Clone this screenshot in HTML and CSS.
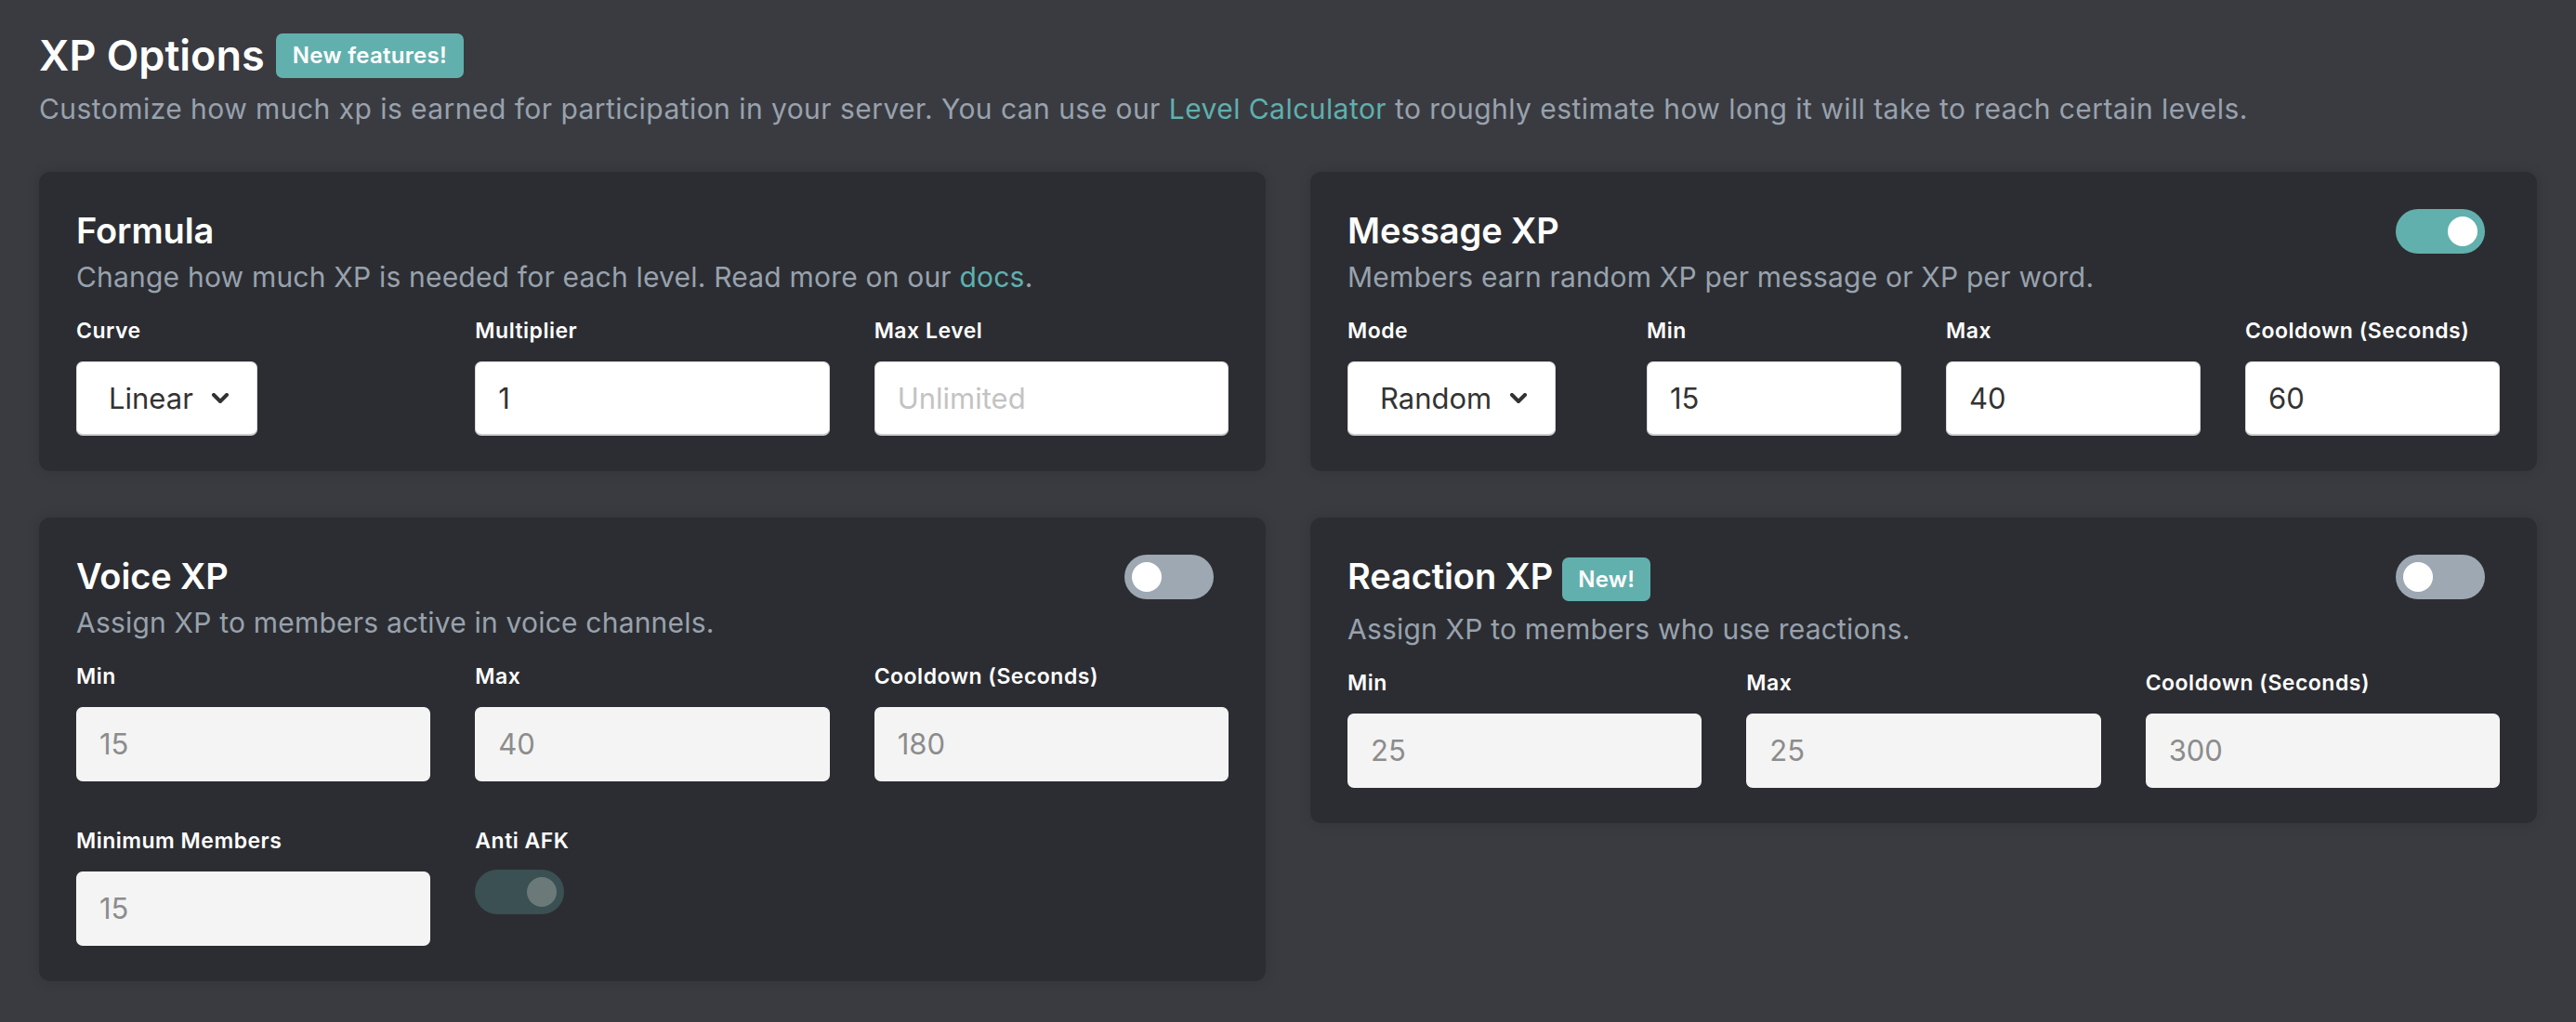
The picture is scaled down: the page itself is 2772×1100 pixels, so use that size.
FILE: index.html
```html
<!DOCTYPE html>
<html lang="en">
<head>
<meta charset="utf-8">
<title>XP Options</title>
<link rel="stylesheet" href="styles.css">
</head>
<body>
<div class="page">
  <header class="page-head">
    <h1 class="page-title">XP Options <span class="badge badge-lg">New features!</span></h1>
    <p class="page-sub">Customize how much xp is earned for participation in your server. You can use our <a class="link" href="#">Level Calculator</a> to roughly estimate how long it will take to reach certain levels.</p>
  </header>

  <div class="cards">
    <section class="card">
      <div class="card-head">
        <h2 class="card-title">Formula</h2>
      </div>
      <p class="card-desc">Change how much XP is needed for each level. Read more on our <a class="link" href="#">docs</a>.</p>
      <div class="fields cols-3">
        <div class="field">
          <label class="label">Curve</label>
          <div class="select"><span>Linear</span><svg class="chev" viewBox="0 0 20 12" width="20" height="12"><polyline points="3,2 10,9 17,2" fill="none" stroke="#333" stroke-width="4" stroke-linecap="round" stroke-linejoin="round"/></svg></div>
        </div>
        <div class="field">
          <label class="label">Multiplier</label>
          <input class="input" type="text" value="1">
        </div>
        <div class="field">
          <label class="label">Max Level</label>
          <input class="input" type="text" placeholder="Unlimited">
        </div>
      </div>
    </section>

    <section class="card">
      <div class="card-head">
        <h2 class="card-title">Message XP</h2>
        <div class="toggle on"><span class="knob"></span></div>
      </div>
      <p class="card-desc">Members earn random XP per message or XP per word.</p>
      <div class="fields cols-4">
        <div class="field">
          <label class="label">Mode</label>
          <div class="select"><span>Random</span><svg class="chev" viewBox="0 0 20 12" width="20" height="12"><polyline points="3,2 10,9 17,2" fill="none" stroke="#333" stroke-width="4" stroke-linecap="round" stroke-linejoin="round"/></svg></div>
        </div>
        <div class="field">
          <label class="label">Min</label>
          <input class="input" type="text" value="15">
        </div>
        <div class="field">
          <label class="label">Max</label>
          <input class="input" type="text" value="40">
        </div>
        <div class="field">
          <label class="label">Cooldown (Seconds)</label>
          <input class="input" type="text" value="60">
        </div>
      </div>
    </section>

    <section class="card">
      <div class="card-head">
        <h2 class="card-title">Voice XP</h2>
        <div class="toggle"><span class="knob"></span></div>
      </div>
      <p class="card-desc">Assign XP to members active in voice channels.</p>
      <div class="fields cols-3">
        <div class="field">
          <label class="label">Min</label>
          <input class="input" type="text" value="15" disabled>
        </div>
        <div class="field">
          <label class="label">Max</label>
          <input class="input" type="text" value="40" disabled>
        </div>
        <div class="field">
          <label class="label">Cooldown (Seconds)</label>
          <input class="input" type="text" value="180" disabled>
        </div>
        <div class="field">
          <label class="label">Minimum Members</label>
          <input class="input" type="text" value="15" disabled>
        </div>
        <div class="field">
          <label class="label">Anti AFK</label>
          <div class="toggle on dim"><span class="knob"></span></div>
        </div>
      </div>
    </section>

    <section class="card">
      <div class="card-head">
        <h2 class="card-title with-badge"><span>Reaction XP</span><span class="badge badge-sm">New!</span></h2>
        <div class="toggle"><span class="knob"></span></div>
      </div>
      <p class="card-desc">Assign XP to members who use reactions.</p>
      <div class="fields cols-3">
        <div class="field">
          <label class="label">Min</label>
          <input class="input" type="text" value="25" disabled>
        </div>
        <div class="field">
          <label class="label">Max</label>
          <input class="input" type="text" value="25" disabled>
        </div>
        <div class="field">
          <label class="label">Cooldown (Seconds)</label>
          <input class="input" type="text" value="300" disabled>
        </div>
      </div>
    </section>
  </div>
</div>
</body>
</html>
```

FILE: styles.css
```css
* { box-sizing: border-box; }

html, body {
  margin: 0;
  padding: 0;
  background: #3a3b41;
}

body {
  font-family: Inter, "Noto Sans", "Liberation Sans", sans-serif;
  color: #ffffff;
}

.page {
  padding: 32px 42px 40px;
}

.page-head {
  margin-bottom: 45px;
}

.page-title {
  margin: 0;
  font-size: 45px;
  line-height: 56px;
  font-weight: 600;
  letter-spacing: 0;
  display: flex;
  align-items: center;
}

.badge {
  display: inline-flex;
  align-items: center;
  justify-content: center;
  background: #62b0ae;
  color: #ffffff;
  font-weight: 600;
  border-radius: 7px;
  letter-spacing: 0.3px;
}

.badge-lg {
  height: 48px;
  padding: 0 18px;
  font-size: 24px;
  margin-left: 12px;
}

.badge-sm {
  height: 47px;
  padding: 0 17px;
  font-size: 24px;
  margin: 3px 0 5px 10px;
  line-height: 1;
}

.page-sub {
  margin: 7px 0 0;
  font-size: 30px;
  line-height: 45px;
  letter-spacing: 0.45px;
  color: #98a2ad;
}

.link {
  color: #5fb0ae;
  text-decoration: none;
}

.cards {
  display: grid;
  grid-template-columns: 1fr 1fr;
  column-gap: 48px;
  row-gap: 50px;
  align-items: start;
}

.card {
  background: #2c2d32;
  border-radius: 12px;
  padding: 40px 40px 38px;
  box-shadow: 0 0 14px rgba(0, 0, 0, 0.12);
}

.card-head {
  display: flex;
  align-items: flex-start;
  justify-content: space-between;
  min-height: 48px;
}

.card-title {
  margin: 0;
  font-size: 38px;
  line-height: 47.5px;
  font-weight: 600;
  letter-spacing: -0.1px;
}

.card-title.with-badge {
  display: flex;
  align-items: flex-start;
}

.card-desc {
  margin: 3px 0 0;
  font-size: 30px;
  line-height: 45px;
  letter-spacing: 0.2px;
  color: #98a2ad;
}

.fields {
  display: grid;
  gap: 48px;
  margin-top: 19px;
}

.cols-3 { grid-template-columns: repeat(3, 1fr); }
.cols-4 { grid-template-columns: repeat(4, 1fr); }

.field {
  display: flex;
  flex-direction: column;
  align-items: flex-start;
  min-width: 0;
}

.label {
  display: block;
  font-size: 23px;
  line-height: 33px;
  font-weight: 600;
  letter-spacing: 0.5px;
  color: #ffffff;
  margin-bottom: 16px;
}

.input {
  width: 100%;
  height: 80px;
  padding: 0 24px;
  border: 1px solid #d8d8d8;
  border-bottom: 2px solid #cdcdcd;
  border-radius: 7px;
  background: #ffffff;
  font-family: Inter, "Noto Sans", "Liberation Sans", sans-serif;
  font-size: 31px;
  color: #333333;
  outline: none;
}

.input::placeholder {
  color: #c3c3c3;
}

.input:disabled {
  background: #f4f4f4;
  border-color: #f4f4f4;
  color: #8c8c8c;
  -webkit-text-fill-color: #8c8c8c;
  opacity: 1;
}

.select {
  display: inline-flex;
  align-items: center;
  height: 80px;
  padding: 0 29px 0 34px;
  border: 1px solid #d8d8d8;
  border-bottom: 2px solid #cdcdcd;
  border-radius: 7px;
  background: #ffffff;
  font-size: 31px;
  color: #333333;
}

.chev {
  margin-left: 19px;
  display: block;
}

.toggle {
  width: 96px;
  height: 48px;
  border-radius: 24px;
  background: #9ea8b2;
  display: flex;
  align-items: center;
  padding: 0 8px;
  margin-right: 16px;
  flex-shrink: 0;
}

.toggle .knob {
  width: 32px;
  height: 32px;
  border-radius: 50%;
  background: #ffffff;
}

.toggle.on {
  background: #62b0ae;
  justify-content: flex-end;
}

.toggle.dim {
  background: #3a5053;
  margin-right: 0;
  margin-top: -2px;
}

.toggle.dim .knob {
  background: #6c7979;
}
```
